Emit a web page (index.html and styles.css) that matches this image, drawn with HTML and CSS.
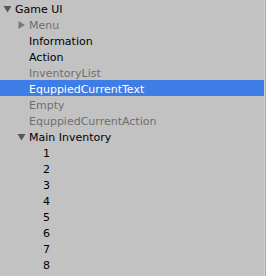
FILE: index.html
```html
<!DOCTYPE html>
<html>
<head>
<meta charset="utf-8">
<link rel="stylesheet" href="styles.css">
</head>
<body>
<div class="tree">
  <div class="row d0"><svg class="arrow" width="9" height="16" viewBox="0 0 9 16"><path d="M0.5 6 L8.5 6 L4.5 12.5 Z" fill="#595959"/></svg><span class="label">Game UI</span></div>
  <div class="row d1"><svg class="arrow" width="9" height="16" viewBox="0 0 9 16"><path d="M1.5 5 L8 9 L1.5 13 Z" fill="#7a7a7a"/></svg><span class="label dim">Menu</span></div>
  <div class="row d1"><span class="spacer"></span><span class="label">Information</span></div>
  <div class="row d1"><span class="spacer"></span><span class="label">Action</span></div>
  <div class="row d1"><span class="spacer"></span><span class="label dim">InventoryList</span></div>
  <div class="row d1 selected"><span class="spacer"></span><span class="label">EquppiedCurrentText</span></div>
  <div class="row d1"><span class="spacer"></span><span class="label dim">Empty</span></div>
  <div class="row d1"><span class="spacer"></span><span class="label dim">EquppiedCurrentAction</span></div>
  <div class="row d1"><svg class="arrow" width="9" height="16" viewBox="0 0 9 16"><path d="M0.5 6 L8.5 6 L4.5 12.5 Z" fill="#595959"/></svg><span class="label">Main Inventory</span></div>
  <div class="row d2"><span class="spacer"></span><span class="label">1</span></div>
  <div class="row d2"><span class="spacer"></span><span class="label">2</span></div>
  <div class="row d2"><span class="spacer"></span><span class="label">3</span></div>
  <div class="row d2"><span class="spacer"></span><span class="label">4</span></div>
  <div class="row d2"><span class="spacer"></span><span class="label">5</span></div>
  <div class="row d2"><span class="spacer"></span><span class="label">6</span></div>
  <div class="row d2"><span class="spacer"></span><span class="label">7</span></div>
  <div class="row d2"><span class="spacer"></span><span class="label">8</span></div>
</div>
</body>
</html>
```
FILE: styles.css
```css
html, body {
  margin: 0;
  padding: 0;
  background: #c2c2c2;
  width: 266px;
  height: 276px;
  overflow: hidden;
}
.tree {
  width: 264px;
  height: 276px;
  border-right: 1px solid #cfcfcf;
  box-shadow: 1px 0 0 #a8a8a8;
  font-family: "DejaVu Sans", "Liberation Sans", sans-serif;
  font-size: 11px;
  color: #000;
}
.row {
  height: 16px;
  display: flex;
  align-items: flex-start;
  white-space: nowrap;
}
.d0 { padding-left: 3px; }
.d1 { padding-left: 17px; }
.d2 { padding-left: 31px; }
.arrow, .spacer {
  flex: 0 0 9px;
  width: 9px;
  height: 16px;
  margin-right: 3px;
}
.label {
  line-height: 16px;
  margin-top: 2px;
}
.dim { color: #6e6e6e; }
.selected {
  background: #3e7de6;
}
.selected .label { color: #fff; }
```
